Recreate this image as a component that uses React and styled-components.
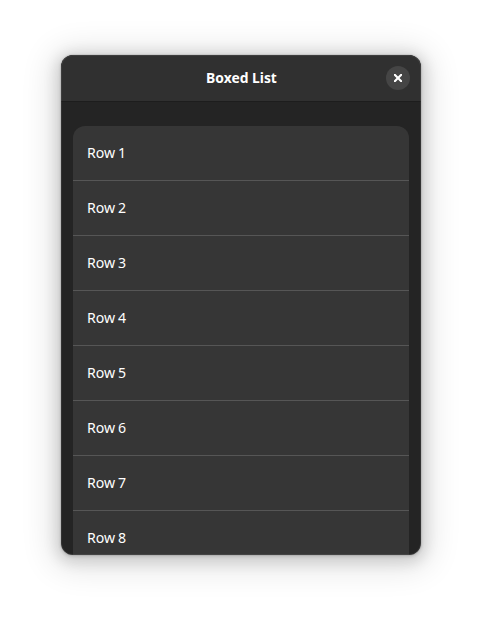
import React from "react";
import styled, { createGlobalStyle } from "styled-components";

const Global = createGlobalStyle`
  * { box-sizing: border-box; }
  html, body { margin: 0; background: #fff; }
  body { font-family: "Noto Sans", sans-serif; }
`;
const Desktop = styled.main`
  width: 482px;
  height: 622px;
  padding: 55px 61px 67px;
  overflow: hidden;
`;
const Window = styled.section`
  position: relative;
  width: 360px;
  height: 500px;
  display: flex;
  flex-direction: column;
  overflow: hidden;
  border-radius: 12px;
  background: #242424;
  color: #fff;
  box-shadow: 0 1px 3px 1px rgba(0,0,0,.1), 0 3px 14px 5px rgba(0,0,0,.12), 0 4px 32px 10px rgba(0,0,0,.11), 0 0 0 1px rgba(0,0,0,.05);

  &::after {
    content: "";
    position: absolute;
    inset: 0;
    border-radius: inherit;
    box-shadow: inset 0 0 0 1px rgba(255,255,255,.07);
    pointer-events: none;
  }
`;
const HeaderBar = styled.header`
  flex: none;
  height: 46px;
  display: grid;
  grid-template-columns: 1fr auto 1fr;
  align-items: center;
  padding: 0 11px;
  background: #303030;
  box-shadow: 0 1px rgba(0,0,0,.18);
`;
const Title = styled.h1`
  grid-column: 2;
  margin: 0 0 2px;
  font-size: 14.667px;
  line-height: 20px;
  font-weight: 700;
  transform: scaleX(.945);
`;
const CloseButton = styled.button`
  justify-self: end;
  width: 24px;
  height: 24px;
  display: grid;
  place-items: center;
  padding: 0;
  border: 0;
  border-radius: 50%;
  color: #fff;
  background: #454545;
`;
const Content = styled.div`
  flex: 1;
  min-height: 0;
  overflow: hidden;
  padding: 25px 12px 0;
`;
const List = styled.ul`
  margin: 0;
  padding: 0;
  list-style: none;
  overflow: hidden;
  border-radius: 12px;
  background: #363636;
`;
const Row = styled.li`
  height: 55px;
  display: flex;
  align-items: center;
  padding: 0 14px 2px;
  border-bottom: 1px solid #565656;
`;
const RowTitle = styled.span`
  font-size: 14.667px;
  line-height: 20px;
  word-spacing: -1px;
  transform: scaleX(.965);
  transform-origin: left center;
`;

export default function App() {
  return (
    <>
      <Global />
      <Desktop>
        <Window>
          <HeaderBar>
            <Title>Boxed List</Title>
            <CloseButton aria-label="Close">
              <svg width="16" height="16" viewBox="0 0 16 16">
                <path d="M4 4h1.5L8 6.5 10.500 4H12v1.500L9.500 8 12 10.500V12h-1.500L8 9.500 5.500 12H4v-1.500L6.500 8 4 5.500z" fill="currentColor" />
              </svg>
            </CloseButton>
          </HeaderBar>
          <Content>
            <List>
              {[1, 2, 3, 4, 5, 6, 7, 8].map((n) => (
                <Row key={n}><RowTitle>{`Row ${n}`}</RowTitle></Row>
              ))}
            </List>
          </Content>
        </Window>
      </Desktop>
    </>
  );
}
